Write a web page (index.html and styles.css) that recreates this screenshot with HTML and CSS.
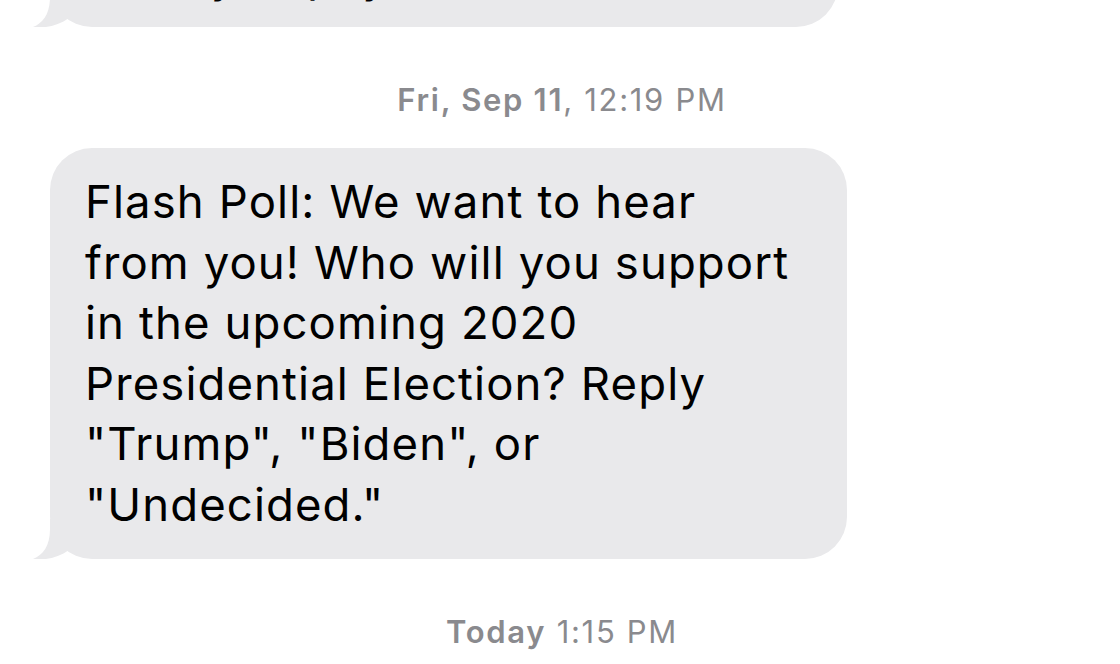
FILE: index.html
```html
<!DOCTYPE html>
<html lang="en">
<head>
<meta charset="utf-8">
<title>Messages</title>
<link rel="stylesheet" href="styles.css">
</head>
<body>
<main class="thread">
  <div class="row">
    <div class="bubble bubble-prev">
      <p class="bubble-text">We're counting on your voice this year,<br>Now, you pay</p>
      <svg class="tail" viewBox="-20 -40 60 40" width="60" height="40" aria-hidden="true"><path d="M0,-40 L0,-30 C0,-13 -7,-4 -17,0 C-6,1.5 8,-1 19,-9 L19,-40 Z"/></svg>
    </div>
  </div>

  <div class="stamp"><span class="stamp-day">Fri, Sep 11</span>, 12:19 PM</div>

  <div class="row">
    <div class="bubble bubble-main">
      <p class="bubble-text">Flash Poll: We want to hear<br>from you! Who will you support<br>in the upcoming 2020<br>Presidential Election? Reply<br>"Trump", "Biden", or<br>"Undecided."</p>
      <svg class="tail" viewBox="-20 -40 60 40" width="60" height="40" aria-hidden="true"><path d="M0,-40 L0,-30 C0,-13 -7,-4 -17,0 C-6,1.5 8,-1 19,-9 L19,-40 Z"/></svg>
    </div>
  </div>

  <div class="stamp stamp-today"><span class="stamp-day">Today</span> 1:15 PM</div>
</main>
</body>
</html>
```
FILE: styles.css
```css
html, body {
  margin: 0;
  padding: 0;
  background: #ffffff;
  height: 664px;
  overflow: hidden;
}

body {
  font-family: "Inter", "Liberation Sans", Arial, sans-serif;
  -webkit-font-smoothing: antialiased;
}

.thread {
  display: flex;
  flex-direction: column;
  padding-left: 50px;
  margin-top: -142px;
}

.row {
  display: flex;
}

.bubble {
  position: relative;
  background: #e9e9eb;
  border-radius: 42px;
  box-sizing: border-box;
  padding: 24px 20px 24px 35px;
}

.bubble-prev {
  width: 788px;
}

.bubble-main {
  width: 797px;
}

.bubble-text {
  margin: 0;
  color: #000000;
  font-size: 45.5px;
  line-height: 60.5px;
  letter-spacing: 1.1px;
  white-space: nowrap;
}

.bubble-prev .bubble-text {
  transform: translateY(3px);
}

.tail {
  position: absolute;
  left: -20px;
  bottom: 0;
  fill: #e9e9eb;
}

.stamp {
  margin: 53px 0 28px -50px;
  padding-left: 4px;
  text-align: center;
  color: #8a8a8e;
  font-size: 31px;
  line-height: 40px;
  font-weight: 400;
  letter-spacing: 1.7px;
}

.stamp-day {
  font-weight: 600;
}

.stamp-today {
  margin-top: 53px;
  margin-bottom: 0;
}
```
